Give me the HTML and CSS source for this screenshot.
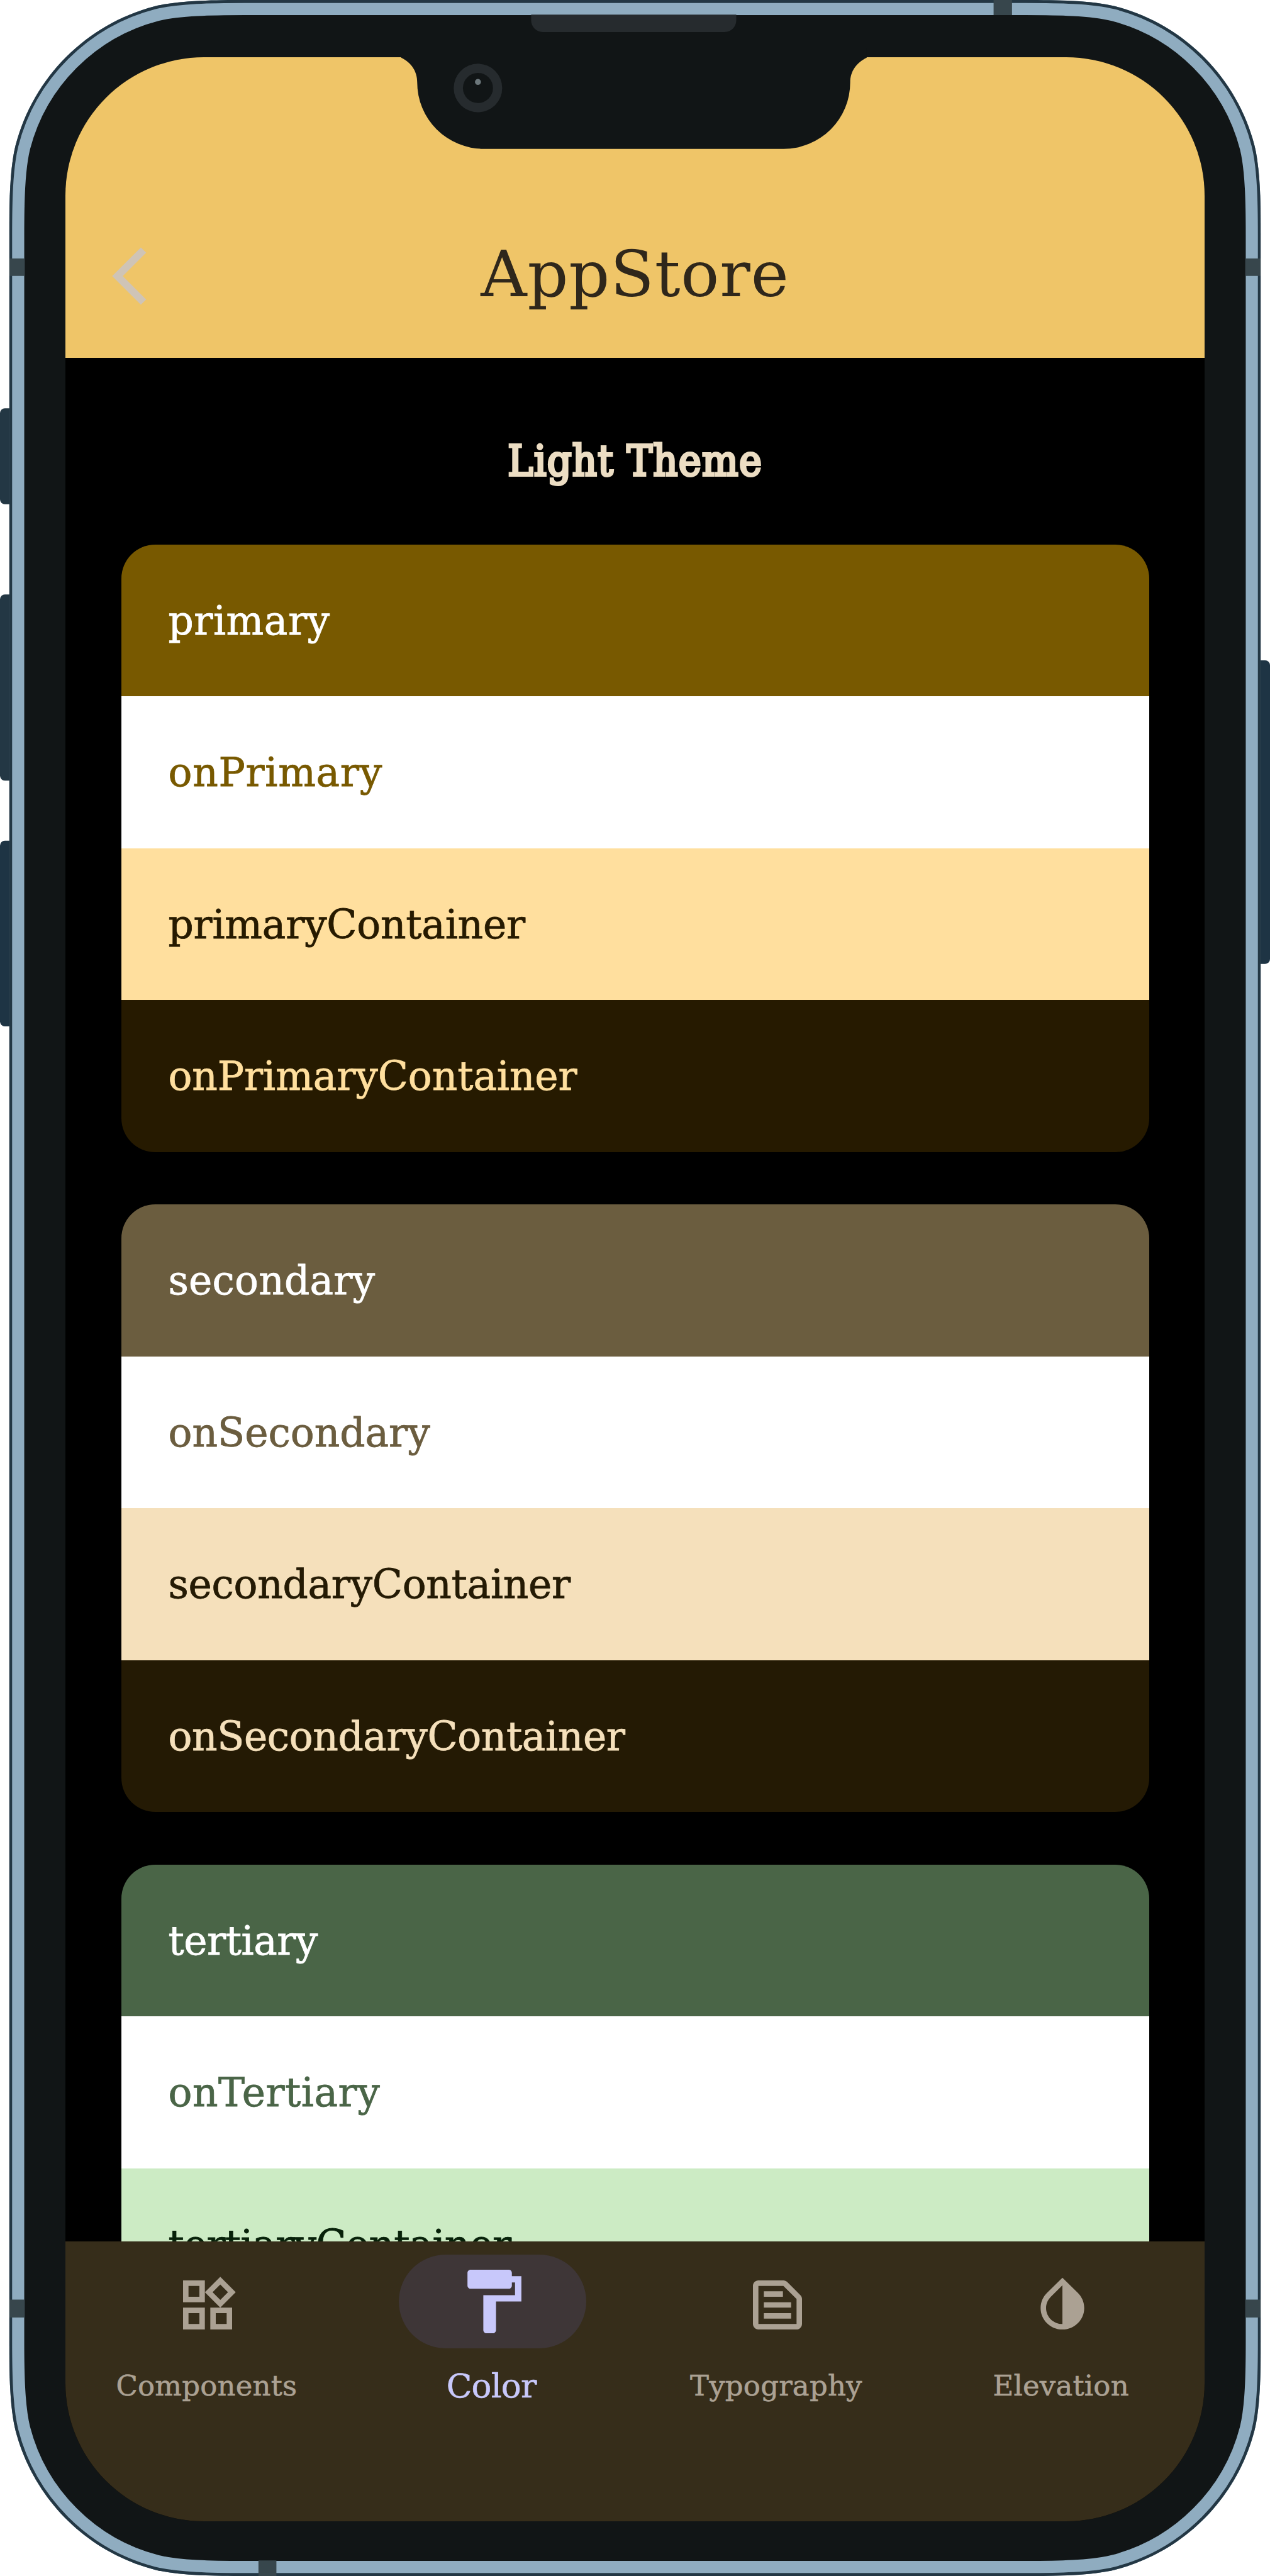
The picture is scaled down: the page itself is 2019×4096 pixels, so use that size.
FILE: index.html
```html
<!DOCTYPE html>
<html lang="en">
<head>
<meta charset="utf-8">
<title>AppStore</title>
<link rel="stylesheet" href="styles.css">
</head>
<body>
<div class="phone">
  <svg class="frame" viewBox="0 0 2619 5313" preserveAspectRatio="none" aria-hidden="true">
    <defs>
      <path id="body" d="M19 485C19 420 20 348 32 300C68.500 159.500 178.500 49.500 319 13C367 1 440 0 504 0H2115C2179 0 2252 1 2300 13C2440.500 49.500 2550.500 159.500 2587 300C2599 348 2600 420 2600 485V4828C2600 4893 2599 4965 2587 5013C2550.500 5153.500 2440.500 5263.500 2300 5300C2252 5312 2179 5313 2115 5313H504C440 5313 367 5312 319 5300C178.500 5263.500 68.500 5153.500 32 5013C20 4965 19 4893 19 4828Z"/>
      <clipPath id="bodyClip"><use href="#body"/></clipPath>
    </defs>
    <g fill="#233744">
      <rect x="0" y="842" width="40" height="198" rx="10"/>
      <rect x="0" y="1226" width="40" height="384" rx="10"/>
      <rect x="0" y="1734" width="40" height="383" rx="10" fill="#1e3444"/>
      <rect x="2579" y="1362" width="40" height="626" rx="10" fill="#1e3444"/>
    </g>
    <g clip-path="url(#bodyClip)">
      <use href="#body" fill="#111516" stroke="#8facc0" stroke-width="62"/>
      <use href="#body" fill="none" stroke="#233744" stroke-width="12"/>
      <g fill="#37464c">
        <path d="M19 533h31v36H19zM2569 533h31v36h-31zM19 4743h31v37H19zM2569 4743h31v37h-31zM2049 0h38v31h-38zM533 5281h37v32h-37z"/>
      </g>
    </g>
  </svg>

  <main class="screen">
    <header class="appbar">
      <svg class="back" viewBox="0 0 71 120"><path d="M59.500 0.500L70.500 11.500L22 60L70.500 108.500L59.500 119.500L0 60Z"/></svg>
      <h1 class="title">AppStore</h1>
    </header>

    <section class="content">
      <h2 class="heading">Light Theme</h2>
      <div class="card">
        <div class="row primary">primary</div>
        <div class="row on-primary">onPrimary</div>
        <div class="row primary-container">primaryContainer</div>
        <div class="row on-primary-container">onPrimaryContainer</div>
      </div>
      <div class="card">
        <div class="row secondary">secondary</div>
        <div class="row on-secondary">onSecondary</div>
        <div class="row secondary-container">secondaryContainer</div>
        <div class="row on-secondary-container">onSecondaryContainer</div>
      </div>
      <div class="card">
        <div class="row tertiary">tertiary</div>
        <div class="row on-tertiary">onTertiary</div>
        <div class="row tertiary-container">tertiaryContainer</div>
        <div class="row on-tertiary-container"></div>
      </div>
    </section>

    <nav class="nav">
      <a class="item">
        <span class="pill"><svg class="icon" viewBox="0 0 24 24"><path d="M16.660 4.520l2.830 2.830-2.830 2.830-2.830-2.830 2.830-2.830M9 5v4H5V5h4m10 10v4h-4v-4h4M9 15v4H5v-4h4m7.660-13.310L11 7.340 16.660 13l5.660-5.660-5.660-5.650zM11 3H3v8h8V3zm10 10h-8v8h8v-8zm-10 0H3v8h8v-8z"/></svg></span>
        <span class="label">Components</span>
      </a>
      <a class="item active">
        <span class="pill"><svg class="icon" viewBox="0 0 24 24"><path d="M18 4V3c0-.55-.45-1-1-1H5c-.55 0-1 .45-1 1v4c0 .55.45 1 1 1h12c.55 0 1-.45 1-1V6h1v4H9v11c0 .55.45 1 1 1h2c.55 0 1-.45 1-1v-9h8V4h-3z"/></svg></span>
        <span class="label">Color</span>
      </a>
      <a class="item">
        <span class="pill"><svg class="icon" viewBox="0 0 24 24"><path d="M14.170 5L19 9.830V19H5V5h9.170m0-2H5c-1.100 0-2 .9-2 2v14c0 1.100.9 2 2 2h14c1.100 0 2-.9 2-2V9.830c0-.53-.21-1.040-.59-1.410l-4.830-4.830c-.37-.38-.88-.59-1.410-.59zM7 15h10v2H7v-2zm0-4h10v2H7v-2zm0-4h7v2H7V7z"/></svg></span>
        <span class="label">Typography</span>
      </a>
      <a class="item">
        <span class="pill"><svg class="icon" viewBox="0 0 24 24"><path d="M12 4.810V19c-3.310 0-6-2.630-6-5.870 0-1.560.62-3.030 1.750-4.140L12 4.810M6.350 7.560C4.900 8.990 4 10.960 4 13.130 4 17.480 7.580 21 12 21s8-3.520 8-7.870c0-2.170-.9-4.140-2.350-5.570L12 2 6.350 7.560z"/></svg></span>
        <span class="label">Elevation</span>
      </a>
    </nav>
  </main>

  <svg class="notch" viewBox="800 0 1019 320" aria-hidden="true">
    <path fill="#111516" d="M827 119C848 129 860 147 860 170A137 137 0 0 0 997 307H1616A137 137 0 0 0 1753 170C1753 147 1766 129 1787 119V100H827Z"/>
    <path fill="#262b2e" d="M1095 30H1518V42A24 24 0 0 1 1494 66H1119A24 24 0 0 1 1095 42Z"/>
    <circle cx="985.300" cy="181.500" r="50" fill="#262b2e"/>
    <circle cx="985.300" cy="181.500" r="31" fill="#111516"/>
    <circle cx="985.300" cy="169" r="6.200" fill="#6c777b"/>
  </svg>
</div>
</body>
</html>
```
FILE: styles.css
```css
html, body {
  margin: 0;
  background: #fff;
}

.phone {
  position: relative;
  box-sizing: border-box;
  width: 2019px;
  height: 4096px;
  padding: 91px 104px 87px;
  overflow: hidden;
  font-family: "Roboto Slab", "DejaVu Serif", serif;
}

.frame {
  position: absolute;
  inset: 0;
  width: 100%;
  height: 100%;
}

.notch {
  position: absolute;
  top: 0;
  left: 616.700px;
  width: 785.500px;
  height: 246.700px;
}

.screen {
  position: relative;
  display: flex;
  flex-direction: column;
  height: 100%;
  overflow: hidden;
  border-radius: 220px;
  background: #000;
}

.appbar {
  display: grid;
  grid-template-columns: 200px 1fr 200px;
  align-items: center;
  flex: none;
  box-sizing: border-box;
  height: 478px;
  padding-top: 218px;
  background: #efc568;
}

.back {
  width: 55px;
  height: 92px;
  margin-left: 74px;
  fill: #cfc4b6;
}

.title {
  margin: 0 0 6px;
  color: #2f271b;
  font-size: 101.500px;
  font-weight: 400;
  line-height: 120px;
  letter-spacing: 0.900px;
  text-align: center;
}

.content {
  display: flex;
  flex: 1;
  flex-direction: column;
  gap: 83.400px;
  min-height: 0;
  padding: 0 88px 0 88.500px;
  overflow: hidden;
}

.heading {
  flex: none;
  height: 213.600px;
  margin: 0;
  color: #ecddc3;
  font-family: "Roboto Slab", "DejaVu Serif Condensed", "DejaVu Serif", serif;
  font-size: 67.500px;
  font-stretch: condensed;
  font-weight: 400;
  line-height: 327px;
  letter-spacing: 1.300px;
  text-align: center;
  -webkit-text-stroke: 3.800px #ecddc3;
}

.card {
  flex: none;
  overflow: hidden;
  border-radius: 54px;
}

.row {
  box-sizing: border-box;
  height: 241.500px;
  padding-left: 75px;
  font-size: 63px;
  line-height: 244.500px;
  letter-spacing: 0.500px;
  -webkit-text-stroke: 0.800px currentColor;
}

.primary { background: #785900; color: #fff; }
.on-primary { background: #fff; color: #785900; letter-spacing: 0.700px; }
.primary-container { background: #ffdf9e; color: #261a00; letter-spacing: -0.250px; }
.on-primary-container { background: #261a00; color: #ffdf9e; letter-spacing: -0.100px; }
.secondary { background: #6b5d3f; color: #fff; letter-spacing: 0.200px; }
.on-secondary { background: #fff; color: #6b5d3f; letter-spacing: 0; }
.secondary-container { background: #f5e0bb; color: #241a04; letter-spacing: -0.300px; }
.on-secondary-container { background: #241a04; color: #f5e0bb; letter-spacing: -0.400px; }
.tertiary { background: #4a6547; color: #fff; letter-spacing: -0.500px; }
.on-tertiary { background: #fff; color: #4a6547; }
.tertiary-container { background: #ccebc4; color: #072109; letter-spacing: -0.850px; }
.on-tertiary-container { background: #072109; }

.nav {
  display: grid;
  grid-template-columns: repeat(4, 1fr);
  flex: none;
  height: 445px;
  background: #362d1a;
  color: #aba193;
}

.item {
  display: flex;
  flex-direction: column;
  align-items: center;
  padding-top: 21px;
}

.pill {
  display: flex;
  align-items: center;
  justify-content: center;
  width: 298px;
  height: 149px;
  padding-top: 10px;
  box-sizing: border-box;
  border-radius: 75px;
}

.icon {
  width: 104px;
  height: 104px;
  fill: currentColor;
}

.label {
  margin: 30px 4px 0 0;
  font-size: 45px;
  line-height: 60px;
  letter-spacing: 0.200px;
  -webkit-text-stroke: 0.600px currentColor;
}

.active { color: #c8c8fb; }
.active .pill { background: #3e3637; padding-top: 0; }
.active .icon { width: 121px; height: 121px; }
.active .label { font-size: 53px; letter-spacing: -0.800px; }
```
